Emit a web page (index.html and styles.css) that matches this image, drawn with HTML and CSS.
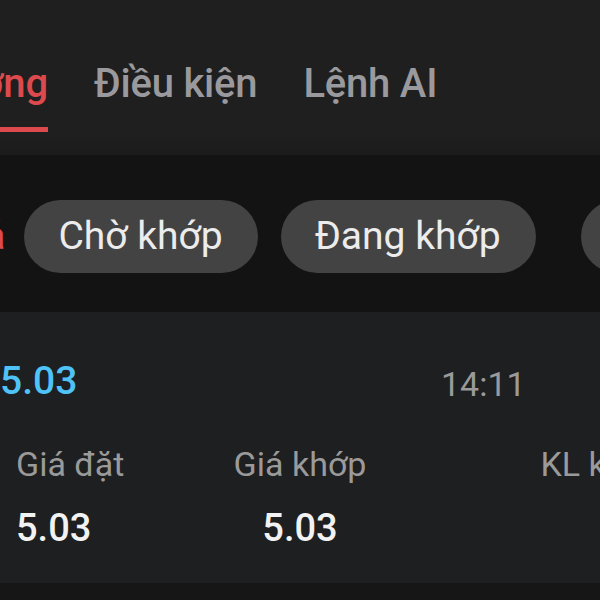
FILE: index.html
```html
<!DOCTYPE html>
<html lang="vi">
<head>
    <meta charset="UTF-8">
    <meta name="viewport" content="width=device-width, initial-scale=1.0">
    <title>Sổ lệnh</title>
    <link rel="stylesheet" href="styles.css">
</head>
<body>
    <div class="tab-bar">
        <div class="tab active">Thường</div>
        <div class="tab">Điều kiện</div>
        <div class="tab">Lệnh AI</div>
    </div>

    <div class="filter-bar">
        <span class="filter selected">Tất cả</span>
        <span class="filter chip">Chờ khớp</span>
        <span class="filter chip">Đang khớp</span>
        <span class="filter chip last">Đã khớp</span>
    </div>

    <div class="order-card">
        <div class="order-head">
            <span class="price">5.03</span>
            <span class="time">14:11</span>
        </div>
        <div class="order-grid">
            <span class="label">Giá đặt</span>
            <span class="label center">Giá khớp</span>
            <span class="label right">KL khớp</span>
            <span class="value">5.03</span>
            <span class="value center">5.03</span>
            <span class="value right"></span>
        </div>
    </div>

    <div class="rest"></div>
</body>
</html>
```

FILE: styles.css
```css
body {
    margin: 0;
    width: 600px;
    height: 600px;
    overflow: hidden;
    background-color: #161616;
    font-family: Roboto, "Noto Sans", sans-serif;
}
.tab-bar {
    display: flex;
    gap: 46px;
    height: 155px;
    margin-left: -90px;
    background: linear-gradient(to bottom, #1f1f1f 0, #1f1f1f 135px, #1b1b1b 155px);
    white-space: nowrap;
}
.tab {
    padding-top: 60px;
    padding-bottom: 19px;
    font-size: 40px;
    font-weight: 500;
    letter-spacing: -0.2px;
    line-height: 48px;
    color: #9a9a9e;
    border-bottom: 5px solid transparent;
    align-self: flex-start;
}
.tab.active {
    color: #dc4a4e;
    border-bottom-color: #dc4a4e;
}
.filter-bar {
    display: flex;
    gap: 23px;
    height: 157px;
    padding-top: 45px;
    box-sizing: border-box;
    background-color: #131313;
    white-space: nowrap;
}
.filter {
    font-size: 39px;
    line-height: 73px;
    height: 73px;
    flex-shrink: 0;
}
.filter.selected {
    color: #dc4a4e;
    margin-left: -101px;
    margin-right: -4px;
}
.chip {
    padding: 0 35px 0 34px;
    border-radius: 37px;
    background-color: #434343;
    color: #ececec;
}
.chip.last {
    margin-left: 22px;
}
.order-card {
    height: 271px;
    padding: 41px 0 0 16px;
    box-sizing: border-box;
    background-color: #1e1f21;
    white-space: nowrap;
}
.order-head {
    display: grid;
    grid-template-columns: 441px auto;
    margin-left: -16px;
    line-height: 56px;
}
.price {
    font-size: 39px;
    font-weight: 500;
    color: #4fc3f7;
}
.time {
    font-size: 34px;
    color: #9a9a9a;
    padding-top: 3px;
}
.order-grid {
    display: grid;
    grid-template-columns: 190px 188px 269px;
    margin-top: 30px;
    row-gap: 17px;
}
.label {
    font-size: 34px;
    line-height: 44px;
    color: #9a9a9a;
}
.value {
    font-size: 38px;
    font-weight: 500;
    line-height: 50px;
    color: #f2f2f2;
}
.center {
    text-align: center;
}
.right {
    text-align: right;
}
.rest {
    height: 17px;
    background-color: #161616;
}
```
